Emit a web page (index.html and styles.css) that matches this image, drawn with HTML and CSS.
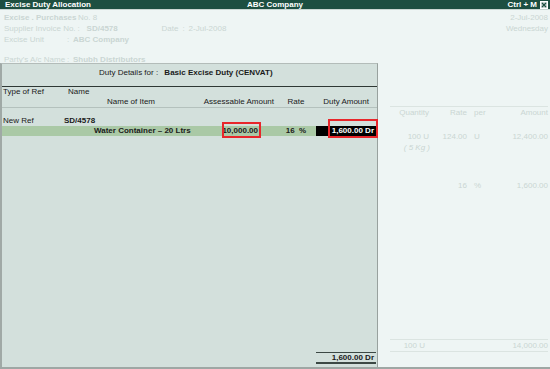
FILE: index.html
```html
<!DOCTYPE html>
<html>
<head>
<meta charset="utf-8">
<link rel="stylesheet" href="styles.css">
</head>
<body>
<div class="screen">
  <div class="titlebar">
    <span class="t-left">Excise Duty Allocation</span>
    <span class="t-center">ABC Company</span>
    <span class="t-right">Ctrl + M
      <svg class="close" width="8" height="8" viewBox="0 0 8 8"><rect x="0.5" y="0.5" width="7" height="7" fill="#cfd8d6" stroke="#ffffff"/><path d="M2 2 L6 6 M6 2 L2 6" stroke="#1d4f41" stroke-width="1.2"/></svg>
    </span>
  </div>

  <div class="form">
    <div class="form-head">
      <div class="fh-left">
        <div class="fl"><b class="w74">Excise . Purchases</b><span>No. 8</span></div>
        <div class="fl"><span class="w67">Supplier Invoice No.</span><span class="w9">:</span><b class="w75">SD/4578</b><span class="w21">Date</span><span class="w6">:</span><span>2-Jul-2008</span></div>
        <div class="fl"><span class="w63">Excise Unit</span><span class="w6">:</span><b>ABC Company</b></div>
        <div class="fl party"><span class="w63">Party's A/c Name</span><span class="w6">:</span><b>Shubh Distributors</b></div>
      </div>
      <div class="fh-right">
        <div>2-Jul-2008</div>
        <div>Wednesday</div>
      </div>
    </div>

    <div class="items">
      <div class="irow ihead"><span class="c-qty">Quantity</span><span class="c-rate">Rate</span><span class="c-per">per</span><span class="c-amt">Amount</span></div>
      <div class="irow r1"><span class="c-qty">100 U</span><span class="c-rate">124.00</span><span class="c-per">U</span><span class="c-amt">12,400.00</span></div>
      <div class="irow"><span class="c-qty kg">( 5 Kg )</span></div>
      <div class="irow r3"><span class="c-qty"></span><span class="c-rate">16</span><span class="c-per">%</span><span class="c-amt">1,600.00</span></div>
      <div class="irow itotal"><span class="c-qty">100 U</span><span class="c-rate"></span><span class="c-per"></span><span class="c-amt">14,000.00</span></div>
    </div>
  </div>

  <div class="panel">
    <div class="p-head">Duty Details for : <b class="duty-name">Basic Excise Duty (CENVAT)</b></div>
    <div class="p-cols">
      <div class="ch1"><span class="h-type">Type of Ref</span><span>Name</span></div>
      <div class="ch2"><span class="c-item h-item">Name of Item</span><span class="c-amt2">Assessable Amount</span><span class="c-rate2">Rate</span><span class="c-duty h-duty">Duty Amount</span></div>
    </div>
    <div class="p-body">
      <div class="ref-row"><span class="h-type">New Ref</span><b>SD/4578</b></div>
      <div class="item-row">
        <b class="c-item v-item">Water Container – 20 Ltrs</b>
        <b class="c-amt2 v-amt"><span class="mark mark-amt"></span>10,000.00</b>
        <b class="c-rate2">16&nbsp;&nbsp;%</b>
        <b class="c-duty v-duty"><span class="mark mark-duty"></span>1,600.00 Dr</b>
      </div>
    </div>
    <div class="p-foot"><b class="total">1,600.00 Dr</b></div>
  </div>
</div>
</body>
</html>
```

FILE: styles.css
```css
html, body {
  margin: 0;
  padding: 0;
}

.screen {
  width: 550px;
  height: 369px;
  position: relative;
  overflow: hidden;
  box-sizing: border-box;
  background: #eef5f4;
  border-bottom: 2px solid #9ea7a4;
  font-family: "Liberation Sans", Arial, sans-serif;
  font-size: 8px;
  line-height: 10px;
  color: #1a1a1a;
}

b { font-weight: bold; }

/* title bar */
.titlebar {
  height: 9px;
  border-bottom: 1px solid #c9d6d2;
  background: #1d4f41;
  color: #ffffff;
  font-weight: bold;
  display: grid;
  grid-template-columns: 1fr auto 1fr;
  align-items: center;
  line-height: 9px;
}
.t-left { padding-left: 5px; }
.t-center { text-align: center; }
.t-right {
  justify-self: end;
  display: flex;
  align-items: center;
  gap: 3px;
  padding-right: 2px;
}
.close { display: block; }

/* faded background form */
.form {
  color: #cad6d3;
}
.form-head {
  display: flex;
  justify-content: space-between;
  padding: 2px 2px 0 4px;
}
.fl {
  height: 11px;
  line-height: 11px;
  white-space: nowrap;
  display: flex;
}
.fl.party { margin-top: 9px; }
.fl > * { display: inline-block; flex-shrink: 0; }
.w74 { min-width: 74px; }
.w67 { min-width: 67px; padding-right: 2px; }
.w63 { min-width: 63px; }
.w9 { min-width: 9px; }
.w6 { min-width: 6px; }
.w75 { min-width: 75px; }
.w21 { min-width: 21px; }
.fh-right {
  text-align: right;
  line-height: 11px;
}

.items {
  margin: 41px 2px 0 390px;
}
.irow {
  display: flex;
  height: 11px;
  line-height: 11px;
  white-space: nowrap;
}
.ihead {
  border-top: 1px solid #dbe4e1;
}
.c-qty { width: 39px; text-align: right; }
.c-rate { width: 38px; text-align: right; }
.c-per { width: 22px; padding-left: 7px; box-sizing: border-box; }
.c-amt { flex: 1; text-align: right; }
.kg { font-style: italic; width: 40px; }
.r1 { margin-top: 13px; }
.r3 { margin-top: 27px; }
.itotal {
  margin-top: 148px;
  height: 11px;
  border-top: 1px solid #dbe4e1;
  border-bottom: 1px solid #dbe4e1;
}
.itotal .c-qty { width: 35px; }

/* overlay panel */
.panel {
  position: absolute;
  left: 0;
  top: 63px;
  width: 378px;
  height: 304px;
  box-sizing: border-box;
  background: #d3e0dc;
  border-left: 2px solid #a0a9a6;
  border-top: 1px solid #b3bcb9;
  border-right: 1px solid #98a19e;
  display: flex;
  flex-direction: column;
  white-space: nowrap;
}
.p-head {
  height: 23px;
  box-sizing: border-box;
  padding: 4px 0 0 97px;
  border-bottom: 1px solid #2e3834;
}
.duty-name { margin-left: 4px; }
.p-cols {
  height: 20px;
  border-bottom: 1px solid #b4c1bd;
}
.ch1, .ch2, .ref-row, .item-row {
  display: flex;
  height: 10px;
  line-height: 10px;
}
.h-type { width: 61px; padding-left: 1px; }
.ch1 .h-type { width: 65px; }
.c-item { width: 198px; box-sizing: border-box; }
.c-amt2 { width: 76px; text-align: right; box-sizing: border-box; position: relative; }
.c-rate2 { width: 40px; text-align: center; }
.c-duty { width: 60px; text-align: right; box-sizing: border-box; position: relative; }
.h-item { padding-left: 105px; }
.ch2 .c-amt2 { padding-right: 2px; }
.h-duty { padding-right: 7px; }

.ref-row { margin-top: 8px; }
.item-row {
  background: linear-gradient(to right, #aac9a6 314px, transparent 314px);
}
.v-item { padding-left: 92px; }
.v-amt { padding-right: 18px; }
.v-duty {
  background: #000000;
  color: #ffffff;
  padding-right: 2px;
}
.mark {
  position: absolute;
  border: 2px solid #e8262b;
  box-sizing: border-box;
}
.mark-amt { left: 22px; right: 15px; top: -4px; bottom: -2px; }
.mark-duty { left: 12px; right: -2px; top: -7px; bottom: -2px; }

.p-body { flex: 1; }
.p-foot {
  padding: 0 0 3px 314px;
}
.total {
  display: block;
  width: 60px;
  text-align: right;
  box-sizing: border-box;
  padding-right: 2px;
  line-height: 9px;
  border-top: 1px solid #3c4844;
  border-bottom: 2px solid #3c4844;
}
```
